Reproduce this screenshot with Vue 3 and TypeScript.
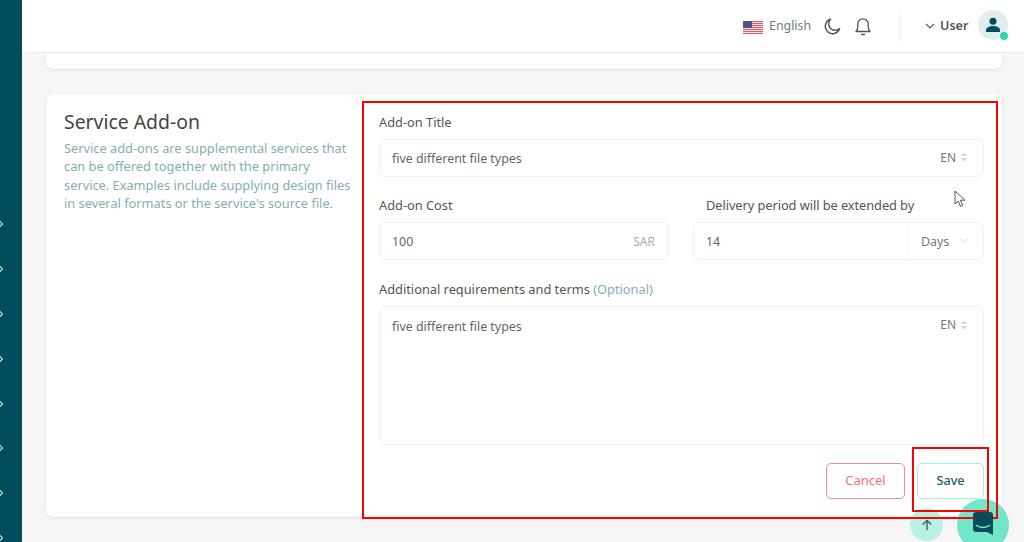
<script setup lang="ts">
const chevrons: number[] = [1, 2, 3, 4, 5, 6, 7, 8];
const stripes: number[] = [0, 2, 4, 6, 8, 10, 12];
</script>

<template>
  <div class="page">
    <aside class="sidebar">
      <svg v-for="c in chevrons" :key="c" class="side-chev" width="6" height="8" viewBox="0 0 6 8">
        <path d="M0.5 1l3 3-3 3" fill="none" stroke="#d8eef0" stroke-width="1.1" />
      </svg>
    </aside>
    <div class="main">
      <header class="topbar">
        <svg class="flag" width="20" height="13" viewBox="0 0 20 13">
          <rect width="20" height="13" fill="#f6dfe0" />
          <rect v-for="s in stripes" :key="s" x="0" :y="s" width="20" height="1" fill="#cf5f6a" />
          <rect width="9" height="7" fill="#4a5688" />
        </svg>
        <span class="lang">English</span>
        <svg class="ico moon" width="17" height="17" viewBox="0 0 17 17">
          <path d="M6.600 1.300a7.300 7.300 0 1 0 9 9.200A6.400 6.400 0 0 1 6.600 1.300z" fill="none" stroke="#555" stroke-width="1.500" stroke-linejoin="round" />
        </svg>
        <svg class="ico bell" width="16" height="19" viewBox="0 0 16 19">
          <path d="M1 14.500c1.200-1.200 1.800-2.200 1.800-5V7a5.200 5.200 0 0 1 10.400 0v2.500c0 2.800.6 3.800 1.800 5z" fill="none" stroke="#555" stroke-width="1.300" stroke-linejoin="round" />
          <path d="M6.600 17.500h2.800" stroke="#555" stroke-width="1.400" stroke-linecap="round" />
        </svg>
        <div class="divider"></div>
        <svg class="user-chev" width="10" height="6" viewBox="0 0 10 6">
          <path d="M1 1l4 4 4-4" fill="none" stroke="#555" stroke-width="1.100" />
        </svg>
        <span class="user">User</span>
        <div class="avatar">
          <svg width="16" height="16" viewBox="0 0 16 16">
            <circle cx="8" cy="4.300" r="3.500" fill="#004d5d" />
            <path d="M1 15v-1.500C1 10.500 4 9 8 9s7 1.500 7 4.500V15z" fill="#004d5d" />
          </svg>
          <span class="status"></span>
        </div>
      </header>

      <div class="content">
        <div class="card stub"></div>
        <section class="card addon">
          <div class="intro">
            <h2>Service Add-on</h2>
            <p>Service add-ons are supplemental services that can be offered together with the primary service. Examples include supplying design files in several formats or the service's source file.</p>
          </div>
          <form class="form" @submit.prevent>
            <label class="label">Add-on Title</label>
            <div class="field title">
              <span>five different file types</span>
              <span class="en">EN <svg width="8" height="10" viewBox="0 0 8 10"><path d="M4 0.500L7.500 4h-7zM4 9.500L.5 6h7z" fill="#d8d8d8" /></svg></span>
            </div>
            <div class="two">
              <div>
                <label class="label">Add-on Cost</label>
                <div class="field half">
                  <span>100</span>
                  <span class="unit">SAR</span>
                </div>
              </div>
              <div>
                <label class="label indented">Delivery period will be extended by</label>
                <div class="field half joined">
                  <span>14</span>
                  <span class="days">Days <svg width="9" height="6" viewBox="0 0 9 6"><path d="M1 1l3.500 3.500L8 1" fill="none" stroke="#ddd" stroke-width="1" /></svg></span>
                </div>
              </div>
            </div>
            <label class="label">Additional requirements and terms <em>(Optional)</em></label>
            <div class="field area">
              <span>five different file types</span>
              <span class="en">EN <svg width="8" height="10" viewBox="0 0 8 10"><path d="M4 0.500L7.500 4h-7zM4 9.500L.5 6h7z" fill="#d8d8d8" /></svg></span>
            </div>
            <div class="actions">
              <button class="btn cancel" type="button">Cancel</button>
              <button class="btn save" type="button">Save</button>
            </div>
          </form>
        </section>
      </div>
    </div>

    <div class="to-top">
      <svg width="12" height="12" viewBox="0 0 12 12"><path d="M6 11V1.500M1.800 5.500L6 1.300l4.200 4.200" fill="none" stroke="#1f5f68" stroke-width="1.300" /></svg>
    </div>
    <div class="chat"></div>
    <div class="mark mark-form"></div>
    <div class="mark mark-save"></div>
    <svg class="chat-icon" width="20" height="23" viewBox="0 0 20 23">
      <path d="M0 3C0 1.300 1.300 0 3 0h14c1.700 0 3 1.300 3 3v20l-6-3H3c-1.700 0-3-1.300-3-3z" fill="#0b4a5a" />
      <path d="M3.500 13.500c3.500 2.500 9.500 2.500 13 0" fill="none" stroke="#7ce8cf" stroke-width="1.500" stroke-linecap="round" />
    </svg>
    <svg class="cursor" width="13" height="18" viewBox="0 0 13 18">
      <path d="M1 1v13l3.200-3 2.300 5.500 2.200-1-2.300-5.300H11z" fill="#fff" stroke="#555" stroke-width="1" />
    </svg>
  </div>
</template>

<style>
html, body { margin: 0; padding: 0; overflow: hidden; }
</style>

<style scoped>
.page {
  position: relative;
  display: flex;
  width: 1024px;
  height: 542px;
  overflow: hidden;
  background: #f6f6f6;
  font-family: "Noto Sans", "Open Sans", sans-serif;
  color: #555;
}
.sidebar {
  width: 22px;
  flex: none;
  background: #004d5d;
  box-sizing: border-box;
  padding-top: 220px;
  display: flex;
  flex-direction: column;
  gap: 37px;
}
.side-chev { display: block; margin-left: -1px; }
.main { flex: 1; min-width: 0; display: flex; flex-direction: column; }
.topbar {
  height: 53px;
  flex: none;
  box-sizing: border-box;
  background: #fff;
  border-bottom: 1px solid #eeeeee;
  display: flex;
  align-items: center;
  padding-left: 721px;
}
.flag { margin-top: 3px; }
.lang { margin-left: 6px; font-size: 12.4px; color: #6f7b85; width: 42px; white-space: nowrap; margin-top: -1px; }
.moon { margin-left: 13px; }
.bell { margin-left: 14px; }
.divider { width: 1px; height: 30px; background: #f0f0f0; margin-left: 28px; }
.user-chev { margin-left: 25px; }
.user { margin-left: 5px; font-size: 12.6px; font-weight: 600; color: #555; margin-top: -1px; }
.avatar {
  position: relative;
  width: 30px;
  height: 30px;
  margin-left: 10px;
  margin-top: -2px;
  border-radius: 50%;
  background: #e2eced;
  display: flex;
  align-items: center;
  justify-content: center;
}
.status {
  position: absolute;
  right: 0;
  bottom: 0;
  width: 8px;
  height: 8px;
  border-radius: 50%;
  background: #2dd4ae;
}
.content { padding: 0 22px 0 24px; }
.card {
  background: #fff;
  border-radius: 8px;
  box-shadow: 0 1px 3px rgba(0, 0, 0, 0.1);
}
.stub { height: 16px; border-radius: 0 0 8px 8px; }
.addon {
  margin-top: 25px;
  height: 423px;
  box-sizing: border-box;
  display: flex;
  padding: 17px 18px 0 18px;
}
.intro { width: 315px; flex: none; box-sizing: border-box; padding-right: 25px; }
.intro h2 {
  margin: 0;
  font-size: 19.4px;
  line-height: 22px;
  font-weight: 400;
  color: #444;
}
.intro p {
  margin: 6px 0 0;
  font-size: 12.8px;
  line-height: 18.3px;
  color: #83aeb4;
}
.form { flex: 1; min-width: 0; display: flex; flex-direction: column; }
.label { display: block; font-size: 12.8px; line-height: 18px; color: #555; margin-top: 2px; white-space: nowrap; }
.label em { font-style: normal; color: #7fb0b6; }
.indented { padding-left: 13px; letter-spacing: -0.06px; }
.field {
  display: flex;
  justify-content: space-between;
  box-sizing: border-box;
  border: 1px solid #f1f1f1;
  border-radius: 6px;
  padding: 0 15px 0 12px;
  font-size: 12.4px;
  color: #666;
}
.title { height: 38px; margin-top: 8px; align-items: center; }
.two {
  display: grid;
  grid-template-columns: 290px 291px;
  gap: 24px;
  margin-top: 17px;
}
.half { height: 38px; margin-top: 8px; align-items: center; padding-right: 13px; }
.unit { font-size: 12px; color: #aaa; }
.joined { padding-right: 0; align-items: stretch; }
.joined > span:first-child { align-self: center; }
.days {
  box-sizing: border-box;
  width: 76px;
  padding: 0 15px 0 13px;
  border-left: 1px solid #f5f5f5;
  border-radius: 6px;
  display: flex;
  align-items: center;
  justify-content: space-between;
  color: #777;
}
.en { display: inline-flex; align-items: center; gap: 4px; font-size: 12px; color: #777; margin-top: -2px; }
.two + .label { margin-top: 20px; }
.area { height: 139px; margin-top: 8px; padding-top: 11px; align-items: flex-start; }
.area .en { margin-top: -2px; }
.actions {
  display: flex;
  justify-content: flex-end;
  gap: 12px;
  margin-top: 18px;
}
.btn {
  height: 36px;
  box-sizing: border-box;
  background: #fff;
  border-radius: 5px;
  font: 400 13px "Noto Sans", sans-serif;
  padding: 0 0 2px;
}
.cancel { width: 79px; border: 1px solid #fb8a8f; color: #fb6f75; }
.save { width: 67px; border: 1px solid #a5efdc; color: #24596a; font-weight: 500; font-size: 12.6px; }
.mark { position: absolute; box-sizing: border-box; border: 2px solid #ff0000; pointer-events: none; }
.mark-form { left: 362px; top: 101px; width: 636px; height: 418px; }
.mark-save { left: 912px; top: 447px; width: 77px; height: 65px; }
.to-top {
  position: absolute;
  left: 910px;
  top: 508px;
  width: 33px;
  height: 33px;
  border-radius: 50%;
  background: #b7f1e3;
  display: flex;
  align-items: center;
  justify-content: center;
}
.chat {
  position: absolute;
  left: 957px;
  top: 499px;
  width: 52px;
  height: 52px;
  border-radius: 50%;
  background: #72e6cb;
}
.chat-icon { position: absolute; left: 973px; top: 512px; }
.cursor { position: absolute; left: 954px; top: 190px; }
</style>
